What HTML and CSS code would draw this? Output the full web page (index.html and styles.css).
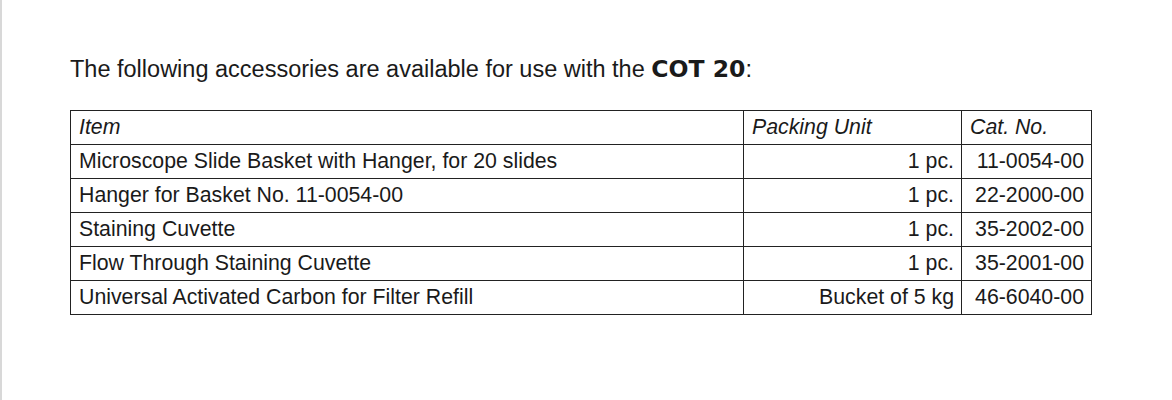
FILE: index.html
```html
<!DOCTYPE html>
<html>
<head>
<meta charset="utf-8">
<link rel="stylesheet" href="styles.css">
</head>
<body>
<div class="page">
  <p class="intro">The following accessories are available for use with the <b class="model">COT 20</b>:</p>
  <table class="acc">
    <colgroup>
      <col class="c-item"><col class="c-unit"><col class="c-cat">
    </colgroup>
    <thead>
      <tr><th>Item</th><th>Packing Unit</th><th>Cat. No.</th></tr>
    </thead>
    <tbody>
      <tr><td>Microscope Slide Basket with Hanger, for 20 slides</td><td class="r">1 pc.</td><td class="r">11-0054-00</td></tr>
      <tr><td>Hanger for Basket No. 11-0054-00</td><td class="r">1 pc.</td><td class="r">22-2000-00</td></tr>
      <tr><td>Staining Cuvette</td><td class="r">1 pc.</td><td class="r">35-2002-00</td></tr>
      <tr><td>Flow Through Staining Cuvette</td><td class="r">1 pc.</td><td class="r">35-2001-00</td></tr>
      <tr><td>Universal Activated Carbon for Filter Refill</td><td class="r">Bucket of 5 kg</td><td class="r">46-6040-00</td></tr>
    </tbody>
  </table>
</div>
</body>
</html>
```
FILE: styles.css
```css
html, body {
  margin: 0;
  padding: 0;
  background: #fff;
}
.page {
  box-sizing: border-box;
  min-height: 400px;
  border-left: 2px solid #d8d8d8;
  padding: 55px 0 0 68px;
  font-family: "Liberation Sans", Arial, sans-serif;
  color: #1a1a1a;
}
.intro {
  margin: 0 0 26px 0;
  font-size: 23.5px;
  line-height: 29px;
}
.model {
  font-family: "DejaVu Sans", "Liberation Sans", sans-serif;
  font-weight: 900;
  font-size: 23.5px;
}
.acc {
  border-collapse: collapse;
  width: 1021px;
  table-layout: fixed;
  font-size: 21.3px;
}
.c-item { width: 673px; }
.c-unit { width: 218px; }
.c-cat { width: 130px; }
.acc th, .acc td {
  border: 1px solid #222;
  height: 33px;
  padding: 0 8px;
  line-height: 23px;
  vertical-align: middle;
  text-align: left;
  white-space: nowrap;
}
.acc th {
  font-weight: normal;
  font-style: italic;
}
.acc td.r {
  text-align: right;
  padding-right: 7px;
}
```
